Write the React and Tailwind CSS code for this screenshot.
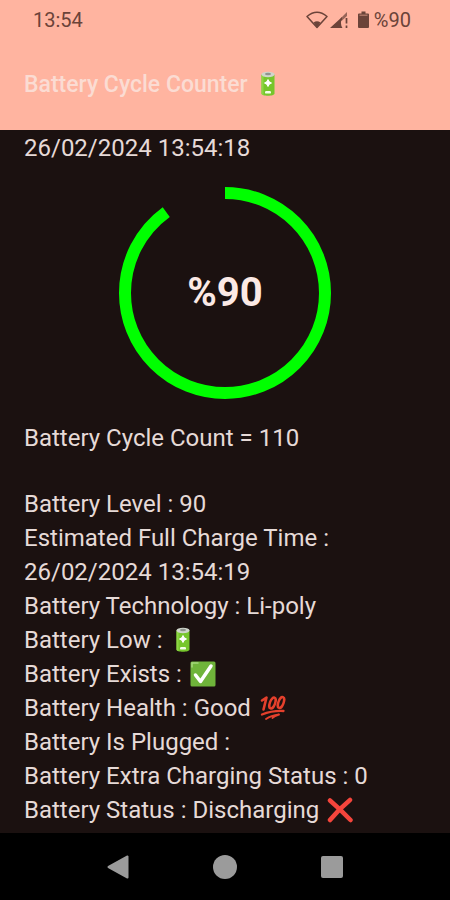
import React from 'react'

const LEVEL = 90

function BatteryIcon() {
  return (
    <svg className="ml-px inline-block h-[26px] w-7 align-[-5px]" viewBox="0 0 28 26" role="img" aria-label="Battery">
      <path d="M7.500 3.500v19c0 3 13 3 13 0v-19z" fill="#76c62c" />
      <path d="M7.500 3.500v19c0 .8.8 1.400 2 1.700V4.500z" fill="#8dd645" />
      <ellipse cx="14" cy="3.500" rx="6.500" ry="2.700" fill="#cfd5cb" />
      <ellipse cx="14" cy="3" rx="3" ry="1.200" fill="#8f958d" />
      <path d="M14 8.500l1.200 2.200 2.300 1.300-2.300 1.300L14 15.500l-1.200-2.200-2.300-1.300 2.300-1.300z" fill="#fff" stroke="#fff" strokeWidth="1" strokeLinejoin="round" />
      <rect x="11" y="20" width="6" height="2.600" rx="1.200" fill="#f4ffe8" />
    </svg>
  )
}

function CheckIcon() {
  return (
    <svg className="ml-0.5 inline-block h-[26px] w-[26px] align-[-5px]" viewBox="0 0 26 26" role="img" aria-label="Yes">
      <rect x="0.500" y="0.500" width="25" height="25" rx="1.500" fill="#6fb43a" />
      <path d="M2 6V2h6" fill="none" stroke="#a5d77c" strokeWidth="1.500" strokeLinecap="round" />
      <path d="M5.500 14l5 6.500L21 5" fill="none" stroke="#fff" strokeWidth="3.500" strokeLinecap="round" strokeLinejoin="round" />
    </svg>
  )
}

function HundredIcon() {
  return (
    <svg className="ml-0.5 inline-block h-[26px] w-7 align-[-5px]" viewBox="0 0 28 26" role="img" aria-label="100">
      <g fill="none" stroke="#e5402c" strokeLinecap="round" strokeLinejoin="round">
        <path d="M3 5.500l4.500-3L4.500 14.500" strokeWidth="2.600" />
        <ellipse cx="13.500" cy="8" rx="2.600" ry="5.800" strokeWidth="2.500" transform="rotate(20 13.500 8)" />
        <ellipse cx="22" cy="7.500" rx="2.600" ry="5.800" strokeWidth="2.500" transform="rotate(20 22 7.500)" />
        <path d="M3 19.500Q13 15.500 24.500 16" strokeWidth="2.300" />
        <path d="M7 24Q12 20.500 20 19.500Q15 21 13.500 23" strokeWidth="1.900" />
      </g>
    </svg>
  )
}

function CrossIcon() {
  return (
    <svg className="ml-0.5 inline-block h-[26px] w-[26px] align-[-5px]" viewBox="0 0 26 26" role="img" aria-label="No">
      <path d="M3 3.500Q13 12 23.500 23M23 3Q12 12 3 23" fill="none" stroke="#f4453c" strokeWidth="4.500" strokeLinecap="round" />
    </svg>
  )
}

function StatusBar() {
  return (
    <div className="flex h-10 items-center justify-between pr-[39px] pl-[33px] text-[20px] text-[#6b4339]">
      <span>13:54</span>
      <div className="flex items-center">
        <svg className="h-5 w-[64px]" viewBox="0 0 64 20" aria-hidden="true">
          <path d="M1 6.500Q11 -2 21 6.500L11 17.500z" fill="none" stroke="#6b4339" strokeWidth="1.500" strokeLinejoin="round" />
          <path d="M7.500 12.500Q11 10 14.500 12.500L11 17.500z" fill="#6b4339" />
          <path d="M24 18L36 7V9.500Q33.500 13 36.500 18z" fill="#6b4339" />
          <path d="M34.500 8.500L41 2v4l-5.500 5z" fill="#6b4339" opacity="0.700" />
          <path d="M40.500 8v5.500M40.500 15.500v2.500" stroke="#6b4339" strokeWidth="1.700" />
          <path d="M53 3.500h2.500V1.500h4v2H62q1 0 1 1V17q0 1-1 1h-9q-1 0-1-1V4.500q0-1 1-1z" fill="#6b4339" />
          <path d="M53.500 5.200h8" stroke="#b98070" strokeWidth="1.200" />
        </svg>
        <span className="ml-1">%{LEVEL}</span>
      </div>
    </div>
  )
}

function LevelRing() {
  return (
    <div className="relative mx-auto mt-[21px] h-[214px] w-[214px]">
      <svg className="h-full w-full" viewBox="0 0 214 214" aria-hidden="true">
        <circle
          cx="107"
          cy="107"
          r="100"
          fill="none"
          stroke="#00ff00"
          strokeWidth="12"
          pathLength="100"
          strokeDasharray={`${LEVEL} 100`}
          transform="rotate(-90 107 107)"
        />
      </svg>
      <div className="absolute inset-0 flex items-center justify-center text-[40px] font-bold text-[#fbe9e5]">%{LEVEL}</div>
    </div>
  )
}

const details = [
  { label: 'Battery Level', value: '90' },
  { label: 'Estimated Full Charge Time', value: '26/02/2024 13:54:19' },
  { label: 'Battery Technology', value: 'Li-poly' },
  { label: 'Battery Low', value: <BatteryIcon /> },
  { label: 'Battery Exists', value: <CheckIcon /> },
  { label: 'Battery Health', value: <>Good <HundredIcon /></> },
  { label: 'Battery Is Plugged', value: '' },
  { label: 'Battery Extra Charging Status', value: '0' },
  { label: 'Battery Status', value: <>Discharging <CrossIcon /></> },
]

function NavBar() {
  return (
    <nav className="flex h-[67px] items-center justify-center gap-[83px] bg-black">
      <button type="button" aria-label="Back">
        <svg className="h-6 w-6" viewBox="0 0 24 24">
          <path d="M2.500 12L21.500 1.500V22.500z" fill="#9b9b9b" stroke="#9b9b9b" strokeWidth="2" strokeLinejoin="round" />
        </svg>
      </button>
      <button type="button" aria-label="Home">
        <svg className="h-6 w-6" viewBox="0 0 24 24">
          <circle cx="12" cy="12" r="12" fill="#9b9b9b" />
        </svg>
      </button>
      <button type="button" aria-label="Recent apps">
        <svg className="h-6 w-6" viewBox="0 0 24 24">
          <rect x="1" y="1" width="22" height="22" rx="2" fill="#9b9b9b" />
        </svg>
      </button>
    </nav>
  )
}

function App() {
  return (
    <div className="flex min-h-screen flex-col bg-[#1b1110] font-['Roboto',sans-serif] text-[#e6dad7]">
      <header className="bg-[#ffb4a0]">
        <StatusBar />
        <div className="flex h-[90px] items-center px-6">
          <h1 className="text-[23px] leading-[34px] font-medium text-[#fbdcd3]">
            Battery Cycle Counter <BatteryIcon />
          </h1>
        </div>
      </header>

      <main className="flex-1 px-6 pt-px text-[24px] leading-[34px]">
        <p>26/02/2024 13:54:18</p>
        <LevelRing />
        <p className="mt-[21px]">Battery Cycle Count = 110</p>
        <ul className="mt-8">
          {details.map((item) => (
            <li key={item.label}>
              {item.label} : {item.value}
            </li>
          ))}
        </ul>
      </main>

      <NavBar />
    </div>
  )
}

export default App
